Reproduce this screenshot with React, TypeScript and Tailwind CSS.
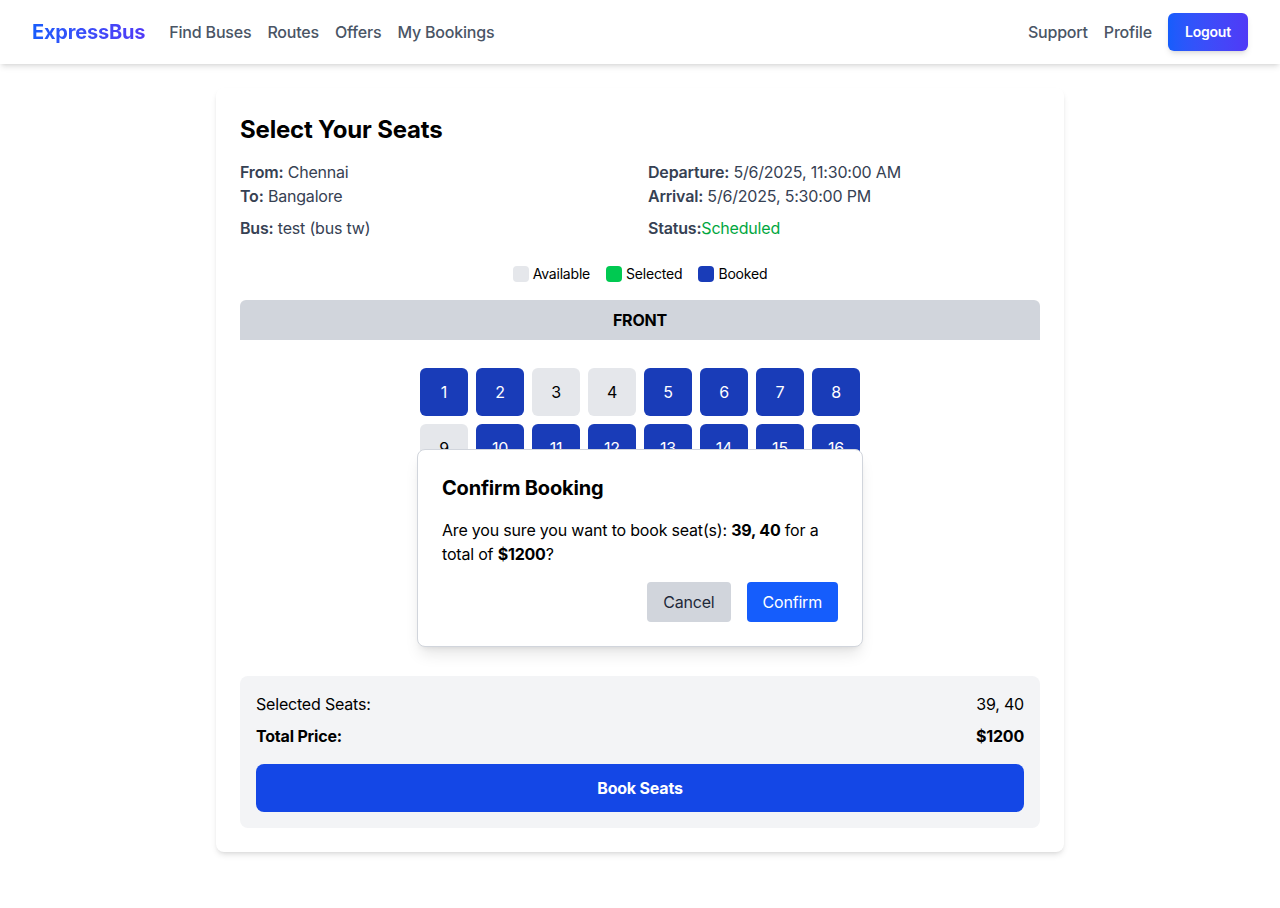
const booked = new Set([1, 2, 5, 6, 7, 8, 10, 11, 12, 13, 14, 15, 16, 17, 18, 21, 22, 25, 26, 29, 30, 33, 34, 35, 36]);
const selected = new Set([39, 40]);

function Seat({ n }: { n: number }) {
  const cls = selected.has(n)
    ? "bg-green-500 text-white"
    : booked.has(n)
      ? "bg-blue-800 text-white"
      : "bg-gray-200 text-black";
  return (
    <button className={`flex h-12 w-12 items-center justify-center rounded-md text-base ${cls}`}>{n}</button>
  );
}

function Legend({ color, label }: { color: string; label: string }) {
  return (
    <div className="flex items-center gap-1">
      <span className={`h-4 w-4 rounded ${color}`} />
      <span>{label}</span>
    </div>
  );
}

export default function App() {
  return (
    <div className="min-h-screen bg-white font-['Inter',sans-serif] tracking-[-0.012em] text-black">
      <nav className="flex h-16 items-center justify-between bg-white px-8 shadow-md">
        <div className="flex items-center gap-6">
          <span className="bg-linear-to-r from-blue-600 to-indigo-600 bg-clip-text text-xl font-bold text-transparent">ExpressBus</span>
          <div className="flex items-center gap-4 text-base font-medium text-gray-600">
            <a>Find Buses</a>
            <a>Routes</a>
            <a>Offers</a>
            <a>My Bookings</a>
          </div>
        </div>
        <div className="flex items-center gap-4 text-base font-medium text-gray-600">
          <a>Support</a>
          <a>Profile</a>
          <button className="h-[38px] rounded-md bg-linear-to-r from-blue-600 to-indigo-600 px-[17px] text-sm font-semibold text-white shadow-md">Logout</button>
        </div>
      </nav>

      <div className="mx-auto mt-6 mb-14 w-[848px] rounded-lg bg-white p-6 shadow-md">
        <h1 className="mt-[2px] mb-[14px] text-2xl font-bold">Select Your Seats</h1>

        <div className="grid grid-cols-2 gap-x-4 gap-y-2 text-base text-gray-700">
          <div>
            <p><span className="font-semibold">From:</span> Chennai</p>
            <p><span className="font-semibold">To:</span> Bangalore</p>
          </div>
          <div>
            <p><span className="font-semibold">Departure:</span> 5/6/2025, 11:30:00 AM</p>
            <p><span className="font-semibold">Arrival:</span> 5/6/2025, 5:30:00 PM</p>
          </div>
          <p><span className="font-semibold">Bus:</span> test (bus tw)</p>
          <p><span className="font-semibold">Status:</span><span className="text-green-600">Scheduled</span></p>
        </div>

        <div className="mt-6 mb-4 flex justify-center gap-4 text-sm leading-5">
          <Legend color="bg-gray-200" label="Available" />
          <Legend color="bg-green-500" label="Selected" />
          <Legend color="bg-blue-800" label="Booked" />
        </div>

        <div className="flex h-10 items-center justify-center rounded-t-md bg-gray-300 font-bold">FRONT</div>

        <div className="relative pt-7 pb-9">
          <div className="mx-auto grid w-fit grid-cols-8 gap-2">
            {Array.from({ length: 40 }).map((_, i) => (
              <Seat key={i} n={i + 1} />
            ))}
          </div>

          <div className="absolute top-[109px] left-1/2 w-[446px] -translate-x-1/2 rounded-lg border border-gray-300 bg-white p-6 shadow-lg">
            <h2 className="mb-4 text-xl font-bold">Confirm Booking</h2>
            <p className="text-base">
              Are you sure you want to book seat(s): <span className="font-bold">39, 40</span> for a total of{" "}
              <span className="font-bold">$1200</span>?
            </p>
            <div className="mt-4 flex justify-end gap-4">
              <button className="rounded bg-gray-300 px-4 py-2 text-gray-800">Cancel</button>
              <button className="rounded bg-blue-600 px-4 py-2 text-white">Confirm</button>
            </div>
          </div>
        </div>

        <div className="rounded-lg bg-gray-100 p-4">
          <div className="mb-2 flex justify-between">
            <span>Selected Seats:</span>
            <span>39, 40</span>
          </div>
          <div className="flex justify-between font-bold">
            <span>Total Price:</span>
            <span>$1200</span>
          </div>
          <button className="mt-4 h-12 w-full rounded-lg bg-blue-700 font-bold text-white">Book Seats</button>
        </div>
      </div>
    </div>
  );
}
